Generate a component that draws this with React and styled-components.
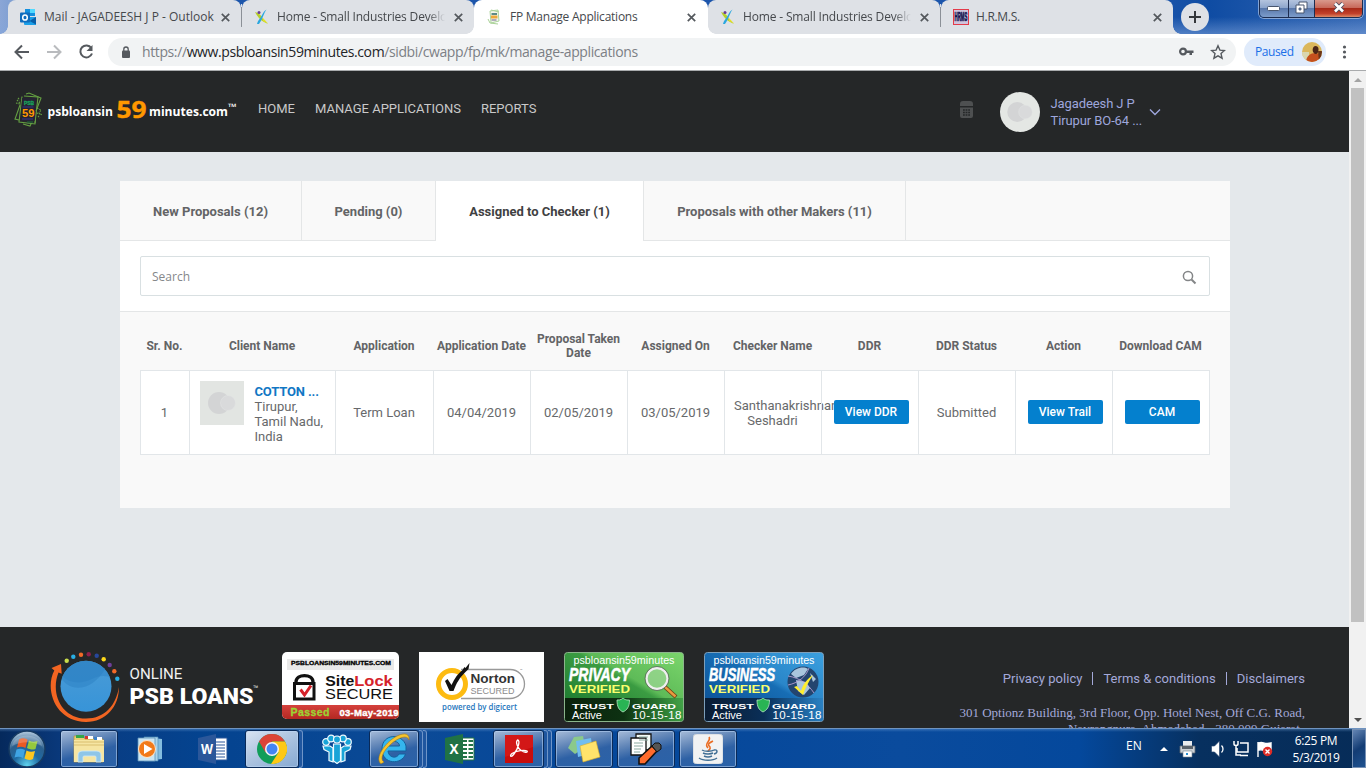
import React from 'react';
import styled, { createGlobalStyle, css } from 'styled-components';

const ui = '"Open Sans", "Noto Sans", sans-serif';
const roboto = 'Roboto, "Liberation Sans", sans-serif';

const GlobalStyle = createGlobalStyle`
  * { box-sizing: border-box; }
  html, body { margin: 0; padding: 0; overflow: hidden; }
  body { font-family: ${roboto}; }
  svg { display: block; flex: none; }
`;

const Screen = styled.div`
  width: 1366px;
  height: 768px;
  display: flex;
  flex-direction: column;
  overflow: hidden;
`;

/* ---------- browser frame ---------- */
const TabStrip = styled.div`
  height: 34px;
  flex: none;
  display: flex;
  padding-left: 8px;
  background: linear-gradient(180deg, transparent 50%, rgba(130, 165, 220, 0.55) 100%),
    linear-gradient(90deg, #8ba6d6 0, #7f9fd2 12px, #1c55ab 120px, #1c55ab 1150px, #0f4ca3 1210px, #3568b4 1366px);
`;
const Tab = styled.div`
  position: relative;
  width: ${(p) => p.$w}px;
  height: 34px;
  display: flex;
  align-items: center;
  padding: 0 ${(p) => (p.$active ? 12 : 11)}px 0 12px;
  border-radius: 8px 8px 0 0;
  background: ${(p) => (p.$active ? '#fff' : '#dee1e6')};
  z-index: ${(p) => (p.$active ? 2 : 1)};
  ${(p) => p.$flare && css`
    &::before, &::after {
      content: '';
      position: absolute;
      bottom: 0;
      width: 8px;
      height: 8px;
    }
    &::before {
      left: -8px;
      background: radial-gradient(circle at 0 0, transparent 7.5px, ${p.$active ? '#fff' : '#dee1e6'} 8px);
    }
    &::after {
      right: -8px;
      background: radial-gradient(circle at 100% 0, transparent 7.5px, ${p.$active ? '#fff' : '#dee1e6'} 8px);
    }
  `}
`;
const TabTitle = styled.span`
  flex: 1;
  margin-left: ${(p) => p.$gap || 8}px;
  margin-right: ${(p) => (p.$fade ? 9 : 4)}px;
  overflow: hidden;
  white-space: nowrap;
  font: 12px/16px ${ui};
  letter-spacing: ${(p) => p.$ls || 0}px;
  color: #45484c;
  ${(p) => p.$fade && css`mask-image: linear-gradient(90deg, #000 90%, transparent);`}
`;
const TabDivider = styled.div`
  width: 1px;
  height: 20px;
  margin-top: 7px;
  background: #8b9097;
`;
const DividerSlot = styled.div`
  width: 1px;
  background: linear-gradient(180deg, #1c55ab 4px, #dee1e6 4px);
`;
const NewTab = styled.div`
  width: 28px;
  height: 28px;
  margin: 3px 0 0 8px;
  border-radius: 50%;
  background: #dee1e6;
  display: flex;
  align-items: center;
  justify-content: center;
`;
const WindowControls = styled.div`
  display: flex;
  width: 104px;
  height: 18px;
  margin-left: auto;
  margin-right: 3px;
  border: 1px solid #1d2d50;
  border-top: 0;
  border-radius: 0 0 5px 5px;
  overflow: hidden;
  box-shadow: 0 0 0 1px rgba(200, 215, 240, 0.6);
`;
const WindowButton = styled.div`
  width: ${(p) => p.$w}px;
  display: flex;
  align-items: center;
  justify-content: center;
  padding-bottom: ${(p) => (p.$low ? 0 : 2)}px;
  border-right: ${(p) => (p.$close ? 0 : '1px solid #1d2d50')};
  background: ${(p) => (p.$close
    ? 'linear-gradient(180deg, #d9998c 0, #c8695a 45%, #a82a18 50%, #c2402a 80%, #dd8a66 100%)'
    : 'linear-gradient(180deg, #b4c4de 0, #8ea6cc 45%, #5a79ac 50%, #7c9cca 100%)')};
`;
const Toolbar = styled.div`
  height: 37px;
  flex: none;
  display: flex;
  align-items: center;
  background: #fff;
  border-bottom: 1px solid #a9abad;
  padding-left: 14px;
`;
const NavIcons = styled.div`
  display: flex;
  gap: 16px;
  width: 94px;
`;
const AddressBar = styled.div`
  width: 1128px;
  height: 28px;
  border-radius: 14px;
  background: #f1f3f4;
  display: flex;
  align-items: center;
  padding: 0 10px 0 12px;
`;
const Url = styled.div`
  flex: 1;
  margin-left: 10px;
  font: 14px/20px ${ui};
  letter-spacing: -0.39px;
  color: #7c8085;
  b { font-weight: 400; color: #222427; }
`;
const AddressIcons = styled.div`
  display: flex;
  gap: 16px;
`;
const ProfileChip = styled.div`
  width: 82px;
  height: 28px;
  margin-left: 8px;
  border-radius: 14px;
  background: #e0ebfb;
  display: flex;
  align-items: center;
  justify-content: space-between;
  padding: 0 4px 0 11px;
  font: 12px/16px ${ui};
  letter-spacing: -0.4px;
  color: #1a6fe8;
`;
const MenuDots = styled.div`
  margin-left: 12px;
`;

/* ---------- page ---------- */
const Viewport = styled.div`
  height: 657px;
  flex: none;
  display: flex;
`;
const Page = styled.div`
  width: 1349px;
  overflow: hidden;
  display: flex;
  flex-direction: column;
  background: #e4e8eb;
`;
const ScrollBar = styled.div`
  width: 17px;
  background: #f1f1f1;
  display: flex;
  flex-direction: column;
  align-items: center;
`;
const ScrollArrow = styled.div`
  height: 17px;
  display: flex;
  align-items: center;
`;
const ScrollThumb = styled.div`
  width: 13px;
  height: 534px;
  margin-bottom: 89px;
  background: #c1c1c1;
`;
const Header = styled.header`
  height: 81px;
  flex: none;
  background: #252728;
  display: flex;
`;
const Brand = styled.div`
  width: 258px;
  padding: 20px 0 0 14px;
`;
const MainNav = styled.nav`
  display: flex;
  gap: 20px;
  padding-top: 30px;
  font-size: 13px;
  line-height: 16px;
  color: #c9c9c9;
`;
const CalcSlot = styled.div`
  margin: 30px 27px 0 auto;
`;
const User = styled.div`
  display: flex;
  width: 349px;
  padding-top: 21px;
`;
const UserText = styled.div`
  width: 93px;
  margin-left: 10.5px;
  padding-top: 3px;
  font-size: 13px;
  line-height: 17px;
  letter-spacing: -0.1px;
  white-space: nowrap;
  color: #9ea6dc;
`;
const Chevron = styled.div`
  margin: 16px 0 0 5px;
`;
const Panel = styled.main`
  width: 1110px;
  height: 327px;
  margin: 29px 0 0 120px;
  background: #f9f9f9;
  flex: none;
`;
const PanelTabs = styled.div`
  display: flex;
  height: 60px;
  border-bottom: 1px solid #e4e6e7;
`;
const PanelTab = styled.div`
  width: ${(p) => p.$w}px;
  height: ${(p) => (p.$active ? 60 : 59)}px;
  border-right: 1px solid #e4e6e7;
  background: ${(p) => (p.$active ? '#fff' : 'transparent')};
  color: ${(p) => (p.$active ? '#3f4142' : '#636466')};
  font-size: 13px;
  font-weight: 700;
  line-height: 61px;
  text-align: center;
  white-space: nowrap;
`;
const SearchArea = styled.div`
  height: 71px;
  padding: 15px 20px;
  background: #fff;
  border-bottom: 1px solid #e4e6e7;
`;
const SearchBox = styled.div`
  height: 40px;
  border: 1px solid #d9e0e2;
  border-radius: 2px;
  display: flex;
  align-items: center;
  justify-content: space-between;
  padding: 1px 12px 0 11px;
  font: 12px/16px ${ui};
  color: #85878a;
`;
const columns = '49px 146px 98px repeat(8, 97px) 1px';
const HeadRow = styled.div`
  display: grid;
  grid-template-columns: ${columns};
  height: 58px;
  margin: 0 20px;
  padding-top: 9px;
  align-items: center;
`;
const HeadCell = styled.div`
  font-size: 12px;
  font-weight: 700;
  line-height: 14px;
  text-align: center;
  color: #636466;
  margin: 0 -2px;
`;
const Row = styled.div`
  display: grid;
  grid-template-columns: ${columns};
  height: 85px;
  margin: 0 20px;
  border-top: 1px solid #e2e6e9;
  border-bottom: 1px solid #e2e6e9;
  background: #fff;
`;
const Cell = styled.div`
  border-left: 1px solid #e2e6e9;
  display: flex;
  align-items: center;
  justify-content: center;
  text-align: center;
  padding-right: ${(p) => (p.$flush ? 0 : 1)}px;
  font-size: 13px;
  line-height: 15px;
  color: #67696b;
  min-width: 0;
`;
const ClientCell = styled(Cell)`
  align-items: flex-start;
  justify-content: flex-start;
  text-align: left;
  padding: 10px 0 0 10px;
`;
const ClientInfo = styled.div`
  width: 76px;
  margin: 3px 0 0 10.5px;
`;
const ClientName = styled.div`
  font-weight: 700;
  letter-spacing: -0.15px;
  color: #1177c4;
`;
const Checker = styled.div`
  width: 77px;
`;
const BlueButton = styled.div`
  position: relative;
  width: 75px;
  height: 24px;
  margin: -1px 0 0 2px;
  border-radius: 2px;
  background: #0480ce;
  color: #fff;
  font-size: 12px;
  font-weight: 500;
  line-height: 24px;
`;
const Footer = styled.footer`
  height: 101px;
  margin-top: auto;
  flex: none;
  background: #252728;
  display: flex;
  padding: 25px 44px 0 48px;
`;
const FooterLogo = styled.div`
  width: 234px;
`;
const Badges = styled.div`
  display: flex;
  gap: 20px;
`;
const FooterInfo = styled.div`
  width: 400px;
  margin-left: auto;
  display: flex;
  flex-direction: column;
  align-items: flex-end;
  color: #a4a9d9;
`;
const FooterLinks = styled.div`
  display: flex;
  margin-top: 19px;
  font-size: 13px;
  line-height: 16px;
  letter-spacing: 0.03px;
  span + span {
    margin-left: 10px;
    padding-left: 11px;
    background: linear-gradient(#a4a9d9, #a4a9d9) 0 1px / 1px 13px no-repeat;
  }
`;
const Address = styled.div`
  margin-top: 18px;
  text-align: right;
  font: 13px/16px "Liberation Serif", serif;
  white-space: nowrap;
  div + div { padding-right: 2px; }
`;

/* ---------- taskbar ---------- */
const Taskbar = styled.div`
  height: 40px;
  flex: none;
  display: flex;
  border-top: 1px solid #6f93bf;
  background: linear-gradient(180deg, rgba(130, 175, 225, 0.35) 0, transparent 3px),
    linear-gradient(90deg, #05295c 0, #0a3b80 70px, #04438f 200px, #0b4a97 420px, #04479a 600px, #0a4b9d 900px, #04489c 1080px, #07305f 1200px, #062c58 1366px);
`;
const TaskItem = styled.div`
  width: ${(p) => p.$w}px;
  height: 38px;
  margin: 1px 0 0 ${(p) => p.$ml || 0}px;
  display: flex;
  align-items: center;
  justify-content: center;
  ${(p) => p.$open && css`
    border: 1px solid #0a2a58;
    border-radius: 3px;
    box-shadow: inset 0 0 0 1px rgba(190, 215, 245, 0.55);
    background: ${p.$bright
    ? 'linear-gradient(150deg, #d9e4f2 0, #b3c8e2 40%, #86a9d2 100%)'
    : 'linear-gradient(165deg, #a7bcd9 0, #6488b9 32%, #2e61a5 58%, #2a62a8 100%)'};
  `}
`;
const StackEdge = styled.i`
  width: 4px;
  height: 38px;
  margin-top: 1px;
  border: 1px solid #6f95c8;
  border-left: 0;
  border-radius: 0 3px 3px 0;
  background: #1f569f;
`;
const Tray = styled.div`
  margin-left: auto;
  display: flex;
  align-items: center;
  color: #fff;
  font: 12px/16px ${ui};
`;
const Language = styled.div`
  width: 31px;
  padding-bottom: 5px;
`;
const TrayIcons = styled.div`
  display: flex;
  align-items: center;
  width: 124px;
  height: 38px;
  padding-left: 2px;
`;
const Clock = styled.div`
  width: 70px;
  text-align: center;
  line-height: 16.5px;
  letter-spacing: -0.35px;
  margin-right: 1px;
  padding-top: 2px;
  white-space: nowrap;
`;
const ShowDesktop = styled.div`
  width: 14px;
  height: 39px;
  border: 1px solid #7791b5;
  background: linear-gradient(145deg, #6485b3, #133c74 50%, #1f5290);
`;

const CloseX = () => (
  <svg width="9" height="9" viewBox="0 0 9 9"><path d="M.8.8l7.4 7.4M8.2.8L.8 8.2" stroke="#54585d" strokeWidth="1.7" /></svg>
);
const OutlookIcon = () => (
  <svg width="16" height="16" viewBox="0 0 16 16">
    <path d="M5 0h10v7H5z" fill="#1490df" /><path d="M10 0h5v4h-5z" fill="#50d9ff" /><path d="M5 4h5v5H5z" fill="#0364b8" />
    <path d="M4 8h12v8H5a1 1 0 01-1-1z" fill="#1a9fe8" /><path d="M16 8v7.500L9.500 12z" fill="#0a5fa8" />
    <rect y="3.500" width="10" height="10" rx="1" fill="#0f6cbd" /><ellipse cx="5" cy="8.500" rx="2.300" ry="2.600" fill="none" stroke="#fff" strokeWidth="1.500" />
  </svg>
);
const SidbiIcon = () => (
  <svg width="16" height="16" viewBox="0 0 16 16">
    <path d="M1 3c4 1 7 4 8 7l5 5-4-2C6 11 3 7 1 3z" fill="#b6cf2c" /><path d="M12.500 .5c-3 4-3 8-7.500 14.500H3c1-4 3-5 4.500-8S10 2 12.500 .5z" fill="#2aa7df" />
    <path d="M9 9l5 5.500-5-2.500z" fill="#e3e02b" /><circle cx="5" cy="3.500" r="1.500" fill="#6b3b95" />
  </svg>
);
const FpIcon = () => (
  <svg width="16" height="16" viewBox="0 0 16 16">
    <path d="M4 2l8-1 1 11-8 2z" fill="#f3f8ec" stroke="#a4cf92" strokeWidth=".9" /><path d="M2 10l2 4 8 1M5 1l8 2" fill="none" stroke="#a9d196" />
    <path d="M5.500 5h5.500" stroke="#5b8a86" strokeWidth="2" /><path d="M5 8h6.500" stroke="#eda93c" strokeWidth="3" /><path d="M5.500 11h5" stroke="#9a92ae" strokeWidth="1.500" />
  </svg>
);
const HrmsIcon = () => (
  <svg width="16" height="16" viewBox="0 0 16 16">
    <rect x=".5" y=".5" width="15" height="15" fill="#cfc4dd" stroke="#e33b4a" />
    <text transform="translate(1.600 12.200) scale(.36 1)" fontFamily="Liberation Sans" fontWeight="700" fontSize="12" fill="#12124e" stroke="#12124e" strokeWidth=".7">HRMS</text>
  </svg>
);
const PagePlaceholder = ({ round }) => (
  <svg width={round ? 40 : 44} height={round ? 40 : 44} viewBox="0 0 44 44">
    {round ? <circle cx="22" cy="22" r="22" fill="#e4e7e4" /> : <path d="M0 0h44v44H0z" fill="#e2e5e2" />}
    <circle cx="19" cy="22" r="11" fill="#d3d4d5" /><circle cx="28" cy="22" r="7.500" fill="#d9dadb" stroke="#e3e4e5" strokeWidth=".5" />
  </svg>
);
const BrandLogo = () => (
  <svg width="225" height="40" viewBox="0 0 225 40">
    <g fill="none" stroke="#65a043" strokeWidth="1.100">
      <path d="M10 5l14 1-3 26" /><path d="M12 3l3-1 12 5-5 13" /><path d="M6 14L1 28l4 1" /><path d="M8 5.500L5 31l16 2 .5-5" /><path d="M9 33l7 2 1.500-3" />
      <path d="M3 9l3 3M2 12l4 1M4 7l2 2M23 17l4 2-2 3 3 2M22.500 22l4 1M24 25l2 2" strokeDasharray="1.500 1" />
    </g>
    <path d="M8 7h14l-1.500 23H6.500z" fill="#252333" />
    <g fontFamily="Liberation Sans" fontWeight="700">
      <text x="10" y="13.500" fontSize="4.500" textLength="10" lengthAdjust="spacingAndGlyphs" fill="#18a35c" stroke="#18a35c" strokeWidth=".3">PSB</text>
      <text x="8" y="25.500" fontSize="10.500" textLength="12.500" lengthAdjust="spacingAndGlyphs" fill="#ff9800">59</text>
    </g>
    <path d="M8.500 16h11M8 28h11" stroke="#32306b" strokeWidth="1.500" /><path d="M13 31h6" stroke="#1d6c3f" />
    <g fontFamily="Open Sans" fontWeight="700" fill="#fff">
      <text x="33.500" y="24.500" fontSize="12" textLength="65.500" lengthAdjust="spacingAndGlyphs">psbloansin</text>
      <text x="102.500" y="26.500" fontSize="23.500" textLength="30" lengthAdjust="spacingAndGlyphs" fill="#ff9800" stroke="#ff9800" strokeWidth=".4">59</text>
      <text x="135" y="24.500" fontSize="12" textLength="79" lengthAdjust="spacingAndGlyphs">minutes.com</text>
      <text x="214" y="18.500" fontSize="9" textLength="9" lengthAdjust="spacingAndGlyphs">™</text>
    </g>
  </svg>
);
const dots = [[18.7, 8.7, '#c9dc4a'], [25.3, 4.7, '#29aee4'], [33, 2.7, '#f26a28'], [40.7, 2.3, '#8e1f4b'], [48.7, 3.7, '#27479b'], [55.7, 7.3, '#ffd91a'], [61.7, 13, '#6e3f98'], [66.3, 19.3, '#f26a28'], [69.3, 26.7, '#29aee4']];
const OnlineLoansLogo = () => (
  <svg width="214" height="72" viewBox="0 0 214 72">
    <defs>
      <linearGradient id="globe" x2="0" y2="1"><stop offset="0" stopColor="#4a9bd6" /><stop offset="1" stopColor="#3794d8" /></linearGradient>
      <clipPath id="globeClip"><circle cx="38" cy="34.300" r="25.500" /></clipPath>
    </defs>
    {dots.map(([x, y, c]) => <circle key={c + x} cx={x} cy={y} r="2.200" fill={c} />)}
    <circle cx="38" cy="34.300" r="25.500" fill="url(#globe)" />
    <g clipPath="url(#globeClip)">
      <path d="M14 24c8 8 20 8 30 3 8-4 15-4 21 0V8H14z" fill="#2f84c6" opacity=".55" />
      <path d="M12 24c8 16 30 18 46-8l-8-8C38 10 28 6 20 12z" fill="#2b7fc2" opacity=".45" />
    </g>
    <path d="M13 12L3.500 16l2.800 2.500C-4 38 8 70 38 70c20 0 33-15.500 33-35-3 18-14 31.500-33 31.500C14 66.500 2 42 10.500 20.500l3.200 1.300z" fill="#f26522" />
    <text x="81.500" y="26.800" fontFamily="Roboto" fontSize="14" textLength="53" lengthAdjust="spacingAndGlyphs" fill="#f1f1f1">ONLINE</text>
    <text x="81.500" y="51.500" fontFamily="Roboto" fontWeight="900" fontSize="21.500" textLength="124" lengthAdjust="spacingAndGlyphs" fill="#fff">PSB LOANS</text>
    <text x="205" y="40" fontFamily="Roboto" fontSize="9" fill="#ddd">™</text>
  </svg>
);
const SiteLock = () => (
  <svg width="117" height="68" viewBox="0 0 117 68">
    <defs><linearGradient id="slRed" x2="0" y2="1"><stop stopColor="#d5413c" /><stop offset="1" stopColor="#b32822" /></linearGradient></defs>
    <rect width="117" height="67" rx="5" fill="#fff" /><path d="M5 7h107v11H5z" fill="#e9e9e9" />
    <path d="M0 53h117v9a5 5 0 01-5 5H5a5 5 0 01-5-5z" fill="url(#slRed)" />
    <text x="9" y="13" fontFamily="Liberation Sans" fontWeight="900" fontSize="5.800" textLength="100" lengthAdjust="spacingAndGlyphs" fill="#000" stroke="#000" strokeWidth=".3">PSBLOANSIN59MINUTES.COM</text>
    <path d="M14 32v-2c0-8.500 17-8.500 17 0v2" fill="none" stroke="#111" strokeWidth="3.300" /><rect x="12.500" y="31.500" width="19.500" height="15.500" fill="#fff" stroke="#111" strokeWidth="3" />
    <path d="M18.500 37.500l4 5.500L29 33.500" fill="none" stroke="#d5222a" strokeWidth="3" />
    <g fontFamily="Liberation Sans">
      <text x="43.300" y="34" fontSize="15.300" fontWeight="700" fill="#111" textLength="29" lengthAdjust="spacingAndGlyphs">Site</text>
      <text x="72.300" y="34" fontSize="15.300" fontWeight="700" fill="#d5222a" textLength="38.500" lengthAdjust="spacingAndGlyphs">Lock</text>
      <text x="43" y="47.300" fontSize="13.800" textLength="68" lengthAdjust="spacingAndGlyphs" fill="#111">SECURE</text>
      <text x="8.500" y="63.500" fontSize="10.500" fontWeight="700" textLength="39" fill="#9bd433" stroke="#9bd433" strokeWidth=".3">Passed</text>
      <text x="57.500" y="64.200" fontSize="9.500" fontWeight="700" textLength="59" fill="#fff" stroke="#fff" strokeWidth=".4">03-May-2019</text>
    </g>
  </svg>
);
const Norton = () => (
  <svg width="125" height="70" viewBox="0 0 125 70">
    <path d="M0 0h125v70H0z" fill="#fff" />
    <path d="M42 17.500h49a14.500 14.500 0 010 29H42" fill="none" stroke="#999" strokeWidth="1.300" />
    <circle cx="33" cy="32" r="13.500" fill="#fff" stroke="#fdbb11" strokeWidth="5" />
    <path d="M26 29l2.500-2 4 6c3-7 7-12 11-15l2-3 1 1 4-5-1 6-4 4c-5 5-8 10-11 18h-4z" fill="#111" />
    <g fontFamily="Liberation Sans">
      <text x="51.500" y="31.300" fontSize="13.500" fontWeight="700" textLength="44.500" lengthAdjust="spacingAndGlyphs" fill="#333">Norton</text>
      <text x="51.500" y="42" fontSize="9.500" textLength="44" lengthAdjust="spacingAndGlyphs" fill="#8b8b8b">SECURED</text>
      <text x="23" y="58" fontFamily="Open Sans" fontWeight="600" fontSize="8.500" textLength="75" lengthAdjust="spacingAndGlyphs" fill="#1f76bd">powered by digicert</text>
    </g>
    <text x="101" y="20" fontFamily="Roboto" fontSize="4" fill="#777">™</text>
  </svg>
);
const Shield = () => <path d="M53 48c4 .5 6-2 6-2s2 2.500 6.500 2c0 7-2.500 10-6.500 12-4-2-6-5-6-12z" fill="#29b454" stroke="#b9e9c4" strokeWidth=".8" />;
const TrustGuard = ({ kind }) => {
  const green = kind === 'PRIVACY';
  const id = `tg${kind}`;
  return (
    <svg width="120" height="70" viewBox="0 0 120 70">
      <defs>
        <linearGradient id={id} x1="0" y1="1" x2="1" y2="0">
          <stop stopColor={green ? '#14702a' : '#094a8e'} /><stop offset=".55" stopColor={green ? '#3b9c42' : '#176db4'} /><stop offset=".6" stopColor={green ? '#5ebb58' : '#2a86c9'} /><stop offset="1" stopColor={green ? '#7bd66c' : '#3ba0df'} />
        </linearGradient>
        <linearGradient id={`${id}b`}><stop stopColor={green ? '#0a1c0a' : '#0b1a2e'} stopOpacity=".95" /><stop offset=".5" stopColor={green ? '#0d3212' : '#0a2f58'} /><stop offset="1" stopColor={green ? '#3b9c42' : '#2a7fc0'} stopOpacity=".8" /></linearGradient>
      </defs>
      <rect x=".5" y=".5" width="119" height="69" rx="3" fill={`url(#${id})`} stroke={green ? '#8bb58b' : '#7d9fba'} />
      <path d="M1 46h118v21a2 2 0 01-2 2H3a2 2 0 01-2-2z" fill={`url(#${id}b)`} />
      <g fontFamily="Liberation Sans" fill="#fff">
        <text x="9.500" y="12" fontSize="11" textLength="101" lengthAdjust="spacingAndGlyphs">psbloansin59minutes</text>
        <text x="5" y="28.700" fontSize="17.500" fontWeight="700" fontStyle="italic" textLength={green ? 61 : 66} lengthAdjust="spacingAndGlyphs" stroke="#fff" strokeWidth=".6">{kind}</text>
        <text x="5" y="40.700" fontSize="11.800" fontWeight="700" textLength="61" lengthAdjust="spacingAndGlyphs" fill="#fbff6e">VERIFIED</text>
        <text x="8" y="56.500" fontWeight="700" fontSize="7.500" textLength="42" lengthAdjust="spacingAndGlyphs">TRUST</text>
        <text x="68" y="56.500" fontWeight="700" fontSize="7.500" textLength="44" lengthAdjust="spacingAndGlyphs">GUARD</text>
        <text x="8" y="66.500" fontSize="11.500" textLength="30" lengthAdjust="spacingAndGlyphs">Active</text>
        <text x="68.500" y="66.500" fontSize="11.500" textLength="49">10-15-18</text>
      </g>
      <Shield />
      {green ? (
        <g><path d="M101 35l11 10" stroke="#6b3a12" strokeWidth="4" /><path d="M101 35l10.500 9.500" stroke="#e89a3e" strokeWidth="2.500" /><circle cx="93" cy="26.500" r="10.500" fill="#a9dca0" fillOpacity=".6" stroke="#efefef" strokeWidth="2.300" /><circle cx="93" cy="26.500" r="12" fill="none" stroke="#555" strokeWidth=".7" /></g>
      ) : (
        <g><circle cx="99" cy="30" r="15.500" fill="#24456f" /><path d="M87 22c4-6 12-8 17-5l-4 6-8 3zM92 28l10 2 4 6-6 7-6-4zM106 21l6 6-3 3z" fill="#a9c5dd" /><path d="M84 24c12 2 20 8 26 17M84 33c10-2 18-8 21-17" stroke="#c9a9dd" strokeWidth=".8" fill="none" /><path d="M90 35l3-1 4 5c2-7 6-12 12-16-4 6-8 13-10 20z" fill="#ffee2e" /></g>
      )}
    </svg>
  );
};

const StartOrb = () => (
  <svg width="38" height="38" viewBox="0 0 38 38">
    <defs><radialGradient id="orb" cx=".5" cy=".95" r=".9"><stop stopColor="#5fd3ee" /><stop offset=".4" stopColor="#1e6aa3" /><stop offset=".7" stopColor="#2b5f8d" /><stop offset="1" stopColor="#a5bfd6" /></radialGradient></defs>
    <circle cx="19" cy="19" r="18" fill="url(#orb)" stroke="#173b62" strokeWidth="1.500" />
    <path d="M11 9.500c3-2 5.500-1.500 8.500 0L17.500 18c-3-1.500-5.500-1.500-8.500-.5z" fill="#ea5a23" /><path d="M21 10.500c3 1.500 5 1.500 8.500 .5l-2 8c-3 1-5.500 .5-8.500-1z" fill="#95c93d" />
    <path d="M8.500 19.500c3-1.200 5.500-1 8.500 .5L15 28c-2.500-1.500-5.500-1.500-8.500-.5z" fill="#3fa4e4" /><path d="M18.500 20.500c3 1.500 5.500 1.500 8.500 .5L25 29c-3 1.500-5.500 1-8.500-.5z" fill="#fdc720" />
    <path d="M4 16C6 2 32 2 34 16c-10-5-20-5-30 0z" fill="#fff" opacity=".2" />
  </svg>
);
const FolderIcon = () => (
  <svg width="34" height="32" viewBox="0 0 34 32">
    <path d="M2 3h9l2 3h18v23H2z" fill="#e9cf76" stroke="#b3923f" strokeWidth=".7" /><path d="M4 2h8v3H4z" fill="#35a648" /><path d="M13 3h8v3h-8z" fill="#fff" /><path d="M13 3h3v3h-3z" fill="#d8382c" /><path d="M22 4h8v3h-8z" fill="#fff" /><path d="M22 4h3v3h-3z" fill="#3c81c9" />
    <path d="M2 7h30v22H2z" fill="#f6e5a2" /><path d="M2 12h30M2 9h30" stroke="#d9be6e" /><path d="M6 29v-7c0-3 2-4 5-4h12c4 0 6 1 6 4v7h-5v-5c0-1-1-1-2-1h-9c-1 0-2 0-2 1v5z" fill="#8fc6e8" stroke="#d1ebfa" strokeWidth=".8" />
  </svg>
);
const MediaIcon = () => (
  <svg width="28" height="28" viewBox="0 0 28 28"><path d="M10 2l16 2v20l-16 2z" fill="#84bddf" /><path d="M8 2h14v24H8z" fill="#a9d4ec" stroke="#4d89b5" strokeWidth=".7" /><path d="M2 3h17v23H2z" fill="#c9e5f4" stroke="#5a8fb6" strokeWidth=".8" /><circle cx="11" cy="14" r="8.500" fill="#f27a1a" stroke="#fde5cc" /><path d="M8 9l8.500 5L8 19z" fill="#fff" /></svg>
);
const OfficeIcon = ({ letter, color }) => (
  <svg width="30" height="30" viewBox="0 0 30 30">
    <path d="M16 4h13v22H16z" fill="#fff" stroke={color} strokeWidth="1" />
    {letter === 'W' ? <path d="M18 8h9M18 11h9M18 14h9M18 17h9M18 20h9M18 23h9" stroke={color} strokeWidth="1.200" /> : <path d="M18 7h4M23.500 7H28M18 11h4M23.500 11H28M18 15h4M23.500 15H28M18 19h4M23.500 19H28M18 23h4M23.500 23H28" stroke={color} strokeWidth="2.200" />}
    <path d="M0 4l18-4v30L0 26z" fill={color} />
    <text x="9" y="20" fontFamily="Open Sans" fontWeight="700" fontSize="14" textAnchor="middle" fill="#fff" textLength={letter === 'W' ? 12 : 9} lengthAdjust="spacingAndGlyphs">{letter}</text>
  </svg>
);
const ChromeIcon = () => (
  <svg width="30" height="30" viewBox="0 0 30 30">
    <circle cx="15" cy="15" r="15" fill="#109d59" />
    <path d="M2 7.500A15 15 0 0128 7.500H15L9 12z" fill="#dc4437" /><path d="M2 7.500l6.500 11L15 8z" fill="#dc4437" /><path d="M28 7.500H15l6.500 11L14 30A15 15 0 0028 7.500z" fill="#fdc816" /><circle cx="15" cy="15" r="7" fill="#f4f4f4" /><circle cx="15" cy="15" r="5.500" fill="#4385f3" />
  </svg>
);
const PeopleIcon = () => (
  <svg width="32" height="30" viewBox="0 0 32 30">
    <g fill="#18a4d8" stroke="#f1fbff" strokeWidth="1.200">
      <path d="M2 12h7l3 2v14l-4-1.500V18l-5-2.500zM30 12h-7l-3 2v14l4-1.500V18l5-2.500z" /><path d="M12.500 10h7v17l-3.500 2.500-3.500-2.500z" />
      <circle cx="5" cy="8" r="3.300" /><circle cx="27" cy="8" r="3.300" /><circle cx="10" cy="4.500" r="3.300" /><circle cx="22" cy="4.500" r="3.300" /><circle cx="16" cy="5.500" r="3.500" />
    </g>
  </svg>
);
const IeIcon = () => (
  <svg width="34" height="34" viewBox="0 0 34 34">
    <path d="M29 19H11c.5 7 9 8 11 3h6.500C25 33 5 33 5 17S26 1 29 14zM11.500 14h11c0-6-10-6-11 0z" fill="#35b6ee" stroke="#14619c" strokeWidth="1" />
    <path d="M3 31C-2 24 10 9 20 4c8-4 13-2 12 4-2-6-11-2-18 4C7 18 2 27 7 30c-2 1.500-3 2-4 1z" fill="#f7c52d" stroke="#a77816" strokeWidth=".6" />
  </svg>
);
const AcrobatIcon = () => (
  <svg width="28" height="28" viewBox="0 0 28 28"><path d="M0 0h28v28H0z" fill="#c70d0d" /><path d="M0 0h28v12L0 22z" fill="#e02222" opacity=".5" /><path d="M12.500 5c3 0 1 8-3.500 14-3 4-5 2-2-.5 4-3 13-4 15-2.500 1.500 2-3 1.500-6-.5-3-2.500-6-8-3.500-10.500z" fill="none" stroke="#fff" strokeWidth="1.300" /></svg>
);
const StickyIcon = () => (
  <svg width="34" height="30" viewBox="0 0 34 30"><path d="M1 14L7 3l9-1 2 11L8 20z" fill="#8bc98b" /><path d="M9 7l15-3 2 15-15 4z" fill="#71bdf0" /><path d="M13 12l16-5 4 16-17 5z" fill="#ffe36b" stroke="#dcae27" strokeWidth=".6" /></svg>
);
const NotesIcon = () => (
  <svg width="32" height="32" viewBox="0 0 32 32"><path d="M6 1h15v16H6z" fill="#f5fbf8" stroke="#111" strokeWidth="1.300" /><path d="M1 5h15v17H1z" fill="#fff" stroke="#111" strokeWidth="1.300" /><path d="M9 4h9M9 7h9M4 10h9M4 13h9M4 16h7M4 19h6" stroke="#8aa9a0" /><path d="M9 25L22 13l5 5-12 13H9z" fill="#ff6b2c" stroke="#111" strokeWidth="1.600" /><path d="M22 13l3-3h4l2 2v4l-4 3z" fill="#555" stroke="#111" /></svg>
);
const JavaIcon = () => (
  <svg width="30" height="30" viewBox="0 0 30 30"><rect width="30" height="30" rx="4" fill="#f1f2f3" stroke="#c5ccd3" strokeWidth=".8" /><path d="M16 3c3 4-6 6-1 11M20 7c-6 3-5 4-3 6 1 2-1 3-2 4" fill="none" stroke="#ea6c23" strokeWidth="1.600" /><path d="M9 16c3 2 10 1.500 12 0M10 19c3 1.500 8 1 10 0M11 22c3 1.500 6 1 8 0M6 24c4 3 14 3 18 0M21 16c4-1 4 3 0 4" fill="none" stroke="#3f6e94" strokeWidth="1.400" /></svg>
);

const browserTabs = [
  { w: 233, title: 'Mail - JAGADEESH J P - Outlook', icon: <OutlookIcon />, flare: true, divider: true },
  { w: 232, title: 'Home - Small Industries Development', icon: <SidbiIcon />, fade: true, gap: 7, ls: -0.16 },
  { w: 234, title: 'FP Manage Applications', icon: <FpIcon />, active: true, flare: true, ls: -0.24 },
  { w: 232, title: 'Home - Small Industries Development', icon: <SidbiIcon />, fade: true, divider: true, gap: 7, ls: -0.16 },
  { w: 232, title: 'H.R.M.S.', icon: <HrmsIcon />, flare: true, gap: 7, ls: -0.3 },
];
const heads = ['Sr. No.', 'Client Name', 'Application', 'Application Date', 'Proposal Taken Date', 'Assigned On', 'Checker Name', 'DDR', 'DDR Status', 'Action', 'Download CAM'];

export default function App() {
  return (
    <Screen>
      <GlobalStyle />
      <TabStrip>
        {browserTabs.map((t, i) => (
          <React.Fragment key={i}>
            <Tab $w={t.w} $active={t.active} $flare={t.flare}>
              {t.icon}
              <TabTitle $fade={t.fade} $gap={t.gap} $ls={t.ls}>{t.title}</TabTitle>
              <CloseX />
            </Tab>
            {t.divider && <DividerSlot><TabDivider /></DividerSlot>}
          </React.Fragment>
        ))}
        <NewTab><svg width="14" height="14" viewBox="0 0 14 14"><path d="M7 1v12M1 7h12" stroke="#34373b" strokeWidth="2" /></svg></NewTab>
        <WindowControls>
          <WindowButton $w={29} $low><svg width="13" height="6" viewBox="0 0 13 6"><rect x=".5" y=".5" width="12" height="4" rx="1" fill="#fff" stroke="#48566e" /></svg></WindowButton>
          <WindowButton $w={27}><svg width="13" height="13" viewBox="0 0 13 13"><path d="M4 1h8v7H4z" fill="#fff" stroke="#48566e" /><path d="M1 4h8v8H1z" fill="#fff" stroke="#48566e" /><path d="M4 7h2v2H4z" fill="#7790b9" stroke="#48566e" strokeWidth=".8" /></svg></WindowButton>
          <WindowButton $w={47} $close><svg width="12" height="11" viewBox="0 0 12 11"><path d="M2 1.500l8 8M10 1.500l-8 8" stroke="#4b4a5c" strokeWidth="4.400" /><path d="M2 1.500l8 8M10 1.500l-8 8" stroke="#fff" strokeWidth="2.600" /></svg></WindowButton>
        </WindowControls>
      </TabStrip>
      <Toolbar>
        <NavIcons>
          <svg width="16" height="16" viewBox="0 0 16 16" fill="none" stroke="#55595e" strokeWidth="2"><path d="M15 8H2M8 1.500L1.500 8 8 14.500" /></svg>
          <svg width="16" height="16" viewBox="0 0 16 16" fill="none" stroke="#b9bbbe" strokeWidth="2"><path d="M1 8h13M8 1.500L14.500 8 8 14.500" /></svg>
          <svg width="16" height="16" viewBox="0 0 16 16" fill="none"><path d="M13.300 4A6 6 0 1014 9.500" stroke="#55595e" strokeWidth="2" /><path d="M14.500 1v6h-6z" fill="#55595e" /></svg>
        </NavIcons>
        <AddressBar>
          <svg width="12" height="12" viewBox="0 0 12 12"><rect x="2" y="4.500" width="8" height="7.500" rx="1" fill="#55595e" /><path d="M3.800 5V3.200a2.200 2.200 0 014.400 0V5" fill="none" stroke="#55595e" strokeWidth="1.300" /></svg>
          <Url>https://<b>www.psbloansin59minutes.com</b>/sidbi/cwapp/fp/mk/manage-applications</Url>
          <AddressIcons>
            <svg width="16" height="16" viewBox="0 0 16 16"><circle cx="5" cy="7.500" r="2.900" fill="none" stroke="#55595e" strokeWidth="2.200" /><path d="M8 6.500h7.500v2.500H14v2h-2.500V9H8z" fill="#55595e" /></svg>
            <svg width="16" height="16" viewBox="0 0 16 16"><path d="M8 1.800l1.900 4.300 4.600.4-3.500 3.100 1.100 4.600L8 11.800l-4.100 2.400L5 9.600 1.500 6.500l4.600-.4z" fill="none" stroke="#55595e" strokeWidth="1.400" /></svg>
          </AddressIcons>
        </AddressBar>
        <ProfileChip>
          Paused
          <svg width="20" height="20" viewBox="0 0 20 20"><defs><clipPath id="av"><circle cx="10" cy="10" r="10" /></clipPath></defs><g clipPath="url(#av)"><path d="M0 0h20v20H0z" fill="#dbb75c" /><path d="M0 10h7v10H0z" fill="#d9d6b0" /><path d="M4 20c0-6 5-9 9-9 5 0 7 3 7 9z" fill="#c4501d" /><path d="M11.500 5c1.500-2 5-1 5 2s-1 5-3 5-4-4-2-7z" fill="#4a2517" /><path d="M16 9h4v11h-3z" fill="#6b3518" /></g></svg>
        </ProfileChip>
        <MenuDots><svg width="16" height="16" viewBox="0 0 16 16" fill="#55595e"><circle cx="6.500" cy="3" r="1.600" /><circle cx="6.500" cy="8" r="1.600" /><circle cx="6.500" cy="13" r="1.600" /></svg></MenuDots>
      </Toolbar>

      <Viewport>
        <Page>
          <Header>
            <Brand><BrandLogo /></Brand>
            <MainNav><span>HOME</span><span>MANAGE APPLICATIONS</span><span>REPORTS</span></MainNav>
            <CalcSlot>
              <svg width="13" height="18" viewBox="0 0 13 18"><path d="M3 0h7a3 3 0 013 3v2H0V3a3 3 0 013-3zM0 6.500h13V15a2 2 0 01-2 2H2a2 2 0 01-2-2z" fill="#4e5051" /><path d="M3 9h7M3 11.500h7M3 14h7" stroke="#252728" strokeWidth="1.500" strokeDasharray="1.800 .8" /></svg>
            </CalcSlot>
            <User>
              <PagePlaceholder round />
              <UserText>Jagadeesh J P<br />Tirupur BO-64 ...</UserText>
              <Chevron><svg width="12" height="8" viewBox="0 0 12 8"><path d="M1 1.500l5 5 5-5" fill="none" stroke="#9ea6dc" strokeWidth="1.400" /></svg></Chevron>
            </User>
          </Header>
          <Panel>
            <PanelTabs>
              <PanelTab $w={182}>New Proposals (12)</PanelTab>
              <PanelTab $w={134}>Pending (0)</PanelTab>
              <PanelTab $w={208} $active>Assigned to Checker (1)</PanelTab>
              <PanelTab $w={262}>Proposals with other Makers (11)</PanelTab>
            </PanelTabs>
            <SearchArea>
              <SearchBox>
                Search
                <svg width="16" height="16" viewBox="0 0 16 16" fill="none" stroke="#838587"><circle cx="7" cy="7" r="4.600" strokeWidth="1.500" /><path d="M10.500 10.500l4 4" strokeWidth="2" /></svg>
              </SearchBox>
            </SearchArea>
            <HeadRow>{heads.map((h) => <HeadCell key={h}>{h}</HeadCell>)}</HeadRow>
            <Row>
              <Cell>1</Cell>
              <ClientCell>
                <PagePlaceholder />
                <ClientInfo><ClientName>COTTON ...</ClientName>Tirupur,<br />Tamil Nadu,<br />India</ClientInfo>
              </ClientCell>
              <Cell>Term Loan</Cell>
              <Cell>04/04/2019</Cell>
              <Cell>02/05/2019</Cell>
              <Cell>03/05/2019</Cell>
              <Cell><Checker>Santhanakrishnan Seshadri</Checker></Cell>
              <Cell $flush><BlueButton>View DDR</BlueButton></Cell>
              <Cell>Submitted</Cell>
              <Cell $flush><BlueButton>View Trail</BlueButton></Cell>
              <Cell $flush><BlueButton>CAM</BlueButton></Cell>
              <Cell $flush />
            </Row>
          </Panel>
          <Footer>
            <FooterLogo><OnlineLoansLogo /></FooterLogo>
            <Badges><SiteLock /><Norton /><TrustGuard kind="PRIVACY" /><TrustGuard kind="BUSINESS" /></Badges>
            <FooterInfo>
              <FooterLinks><span>Privacy policy</span><span>Terms &amp; conditions</span><span>Disclaimers</span></FooterLinks>
              <Address>
                <div>301 Optionz Building, 3rd Floor, Opp. Hotel Nest, Off C.G. Road,</div>
                <div>Navrangpura, Ahmedabad - 380 009 Gujarat,</div>
              </Address>
            </FooterInfo>
          </Footer>
        </Page>
        <ScrollBar>
          <ScrollArrow><svg width="8" height="4" viewBox="0 0 8 4"><path d="M4 0l4 4H0z" fill="#a3a3a3" /></svg></ScrollArrow>
          <ScrollThumb />
          <ScrollArrow><svg width="8" height="4" viewBox="0 0 8 4"><path d="M4 4l4-4H0z" fill="#505050" /></svg></ScrollArrow>
        </ScrollBar>
      </Viewport>

      <Taskbar>
        <TaskItem $w={38} $ml={8}><StartOrb /></TaskItem>
        <TaskItem $w={58} $ml={14} $open><FolderIcon /></TaskItem>
        <TaskItem $w={28} $ml={18}><MediaIcon /></TaskItem>
        <TaskItem $w={30} $ml={34}><OfficeIcon letter="W" color="#2b579a" /></TaskItem>
        <TaskItem $w={54} $ml={17} $open $bright><ChromeIcon /></TaskItem>
        <StackEdge />
        <TaskItem $w={32} $ml={18}><PeopleIcon /></TaskItem>
        <TaskItem $w={50} $ml={16} $open><IeIcon /></TaskItem>
        <StackEdge /><StackEdge />
        <TaskItem $w={30} $ml={18}><OfficeIcon letter="X" color="#207245" /></TaskItem>
        <TaskItem $w={51} $ml={18} $open><AcrobatIcon /></TaskItem>
        <StackEdge /><StackEdge />
        <TaskItem $w={58} $ml={3} $open><StickyIcon /></TaskItem>
        <TaskItem $w={58} $ml={4} $open><NotesIcon /></TaskItem>
        <TaskItem $w={58} $ml={4} $open><JavaIcon /></TaskItem>
        <Tray>
          <Language>EN</Language>
          <TrayIcons>
            <svg width="122" height="24" viewBox="0 0 122 24">
              <path d="M1 14l4-4 4 4z" fill="#fff" />
              <g><path d="M24 4h9v6h-9z" fill="#e9ecef" /><path d="M21 9h15v7H21z" fill="#cbd0d5" stroke="#5e6871" strokeWidth=".8" /><path d="M23 9h11v3H23z" fill="#59626b" /><path d="M24 14h9v6h-9z" fill="#fff" stroke="#7b8791" strokeWidth=".6" /><path d="M27 16h2v2h-2z" fill="#2d8fd0" /></g>
              <g><path d="M52.500 9h3l5-5v16l-5-5h-3z" fill="#fff" stroke="#27456e" strokeWidth=".7" /><path d="M62.500 8.500c2 2 2 5 0 7" fill="none" stroke="#fff" strokeWidth="1.300" /></g>
              <g fill="none" stroke="#fff" strokeWidth="1.500"><path d="M81 6h8v9H78V11" /><path d="M75 4v3c0 2 4 2 4 0V4M77 9v9h5M81 18.500h8" /></g>
              <path d="M99 5v15M100 6c4-2 5 2 12 0v7c-6 2-7-1-12 0z" fill="#fff" stroke="#fff" strokeWidth="1.400" /><circle cx="108.500" cy="14.500" r="4.700" fill="#df2c26" /><path d="M106.500 12.500l4 4M110.500 12.500l-4 4" stroke="#fff" strokeWidth="1.400" />
            </svg>
          </TrayIcons>
          <Clock>6:25 PM<br />5/3/2019</Clock>
          <ShowDesktop />
        </Tray>
      </Taskbar>
    </Screen>
  );
}
